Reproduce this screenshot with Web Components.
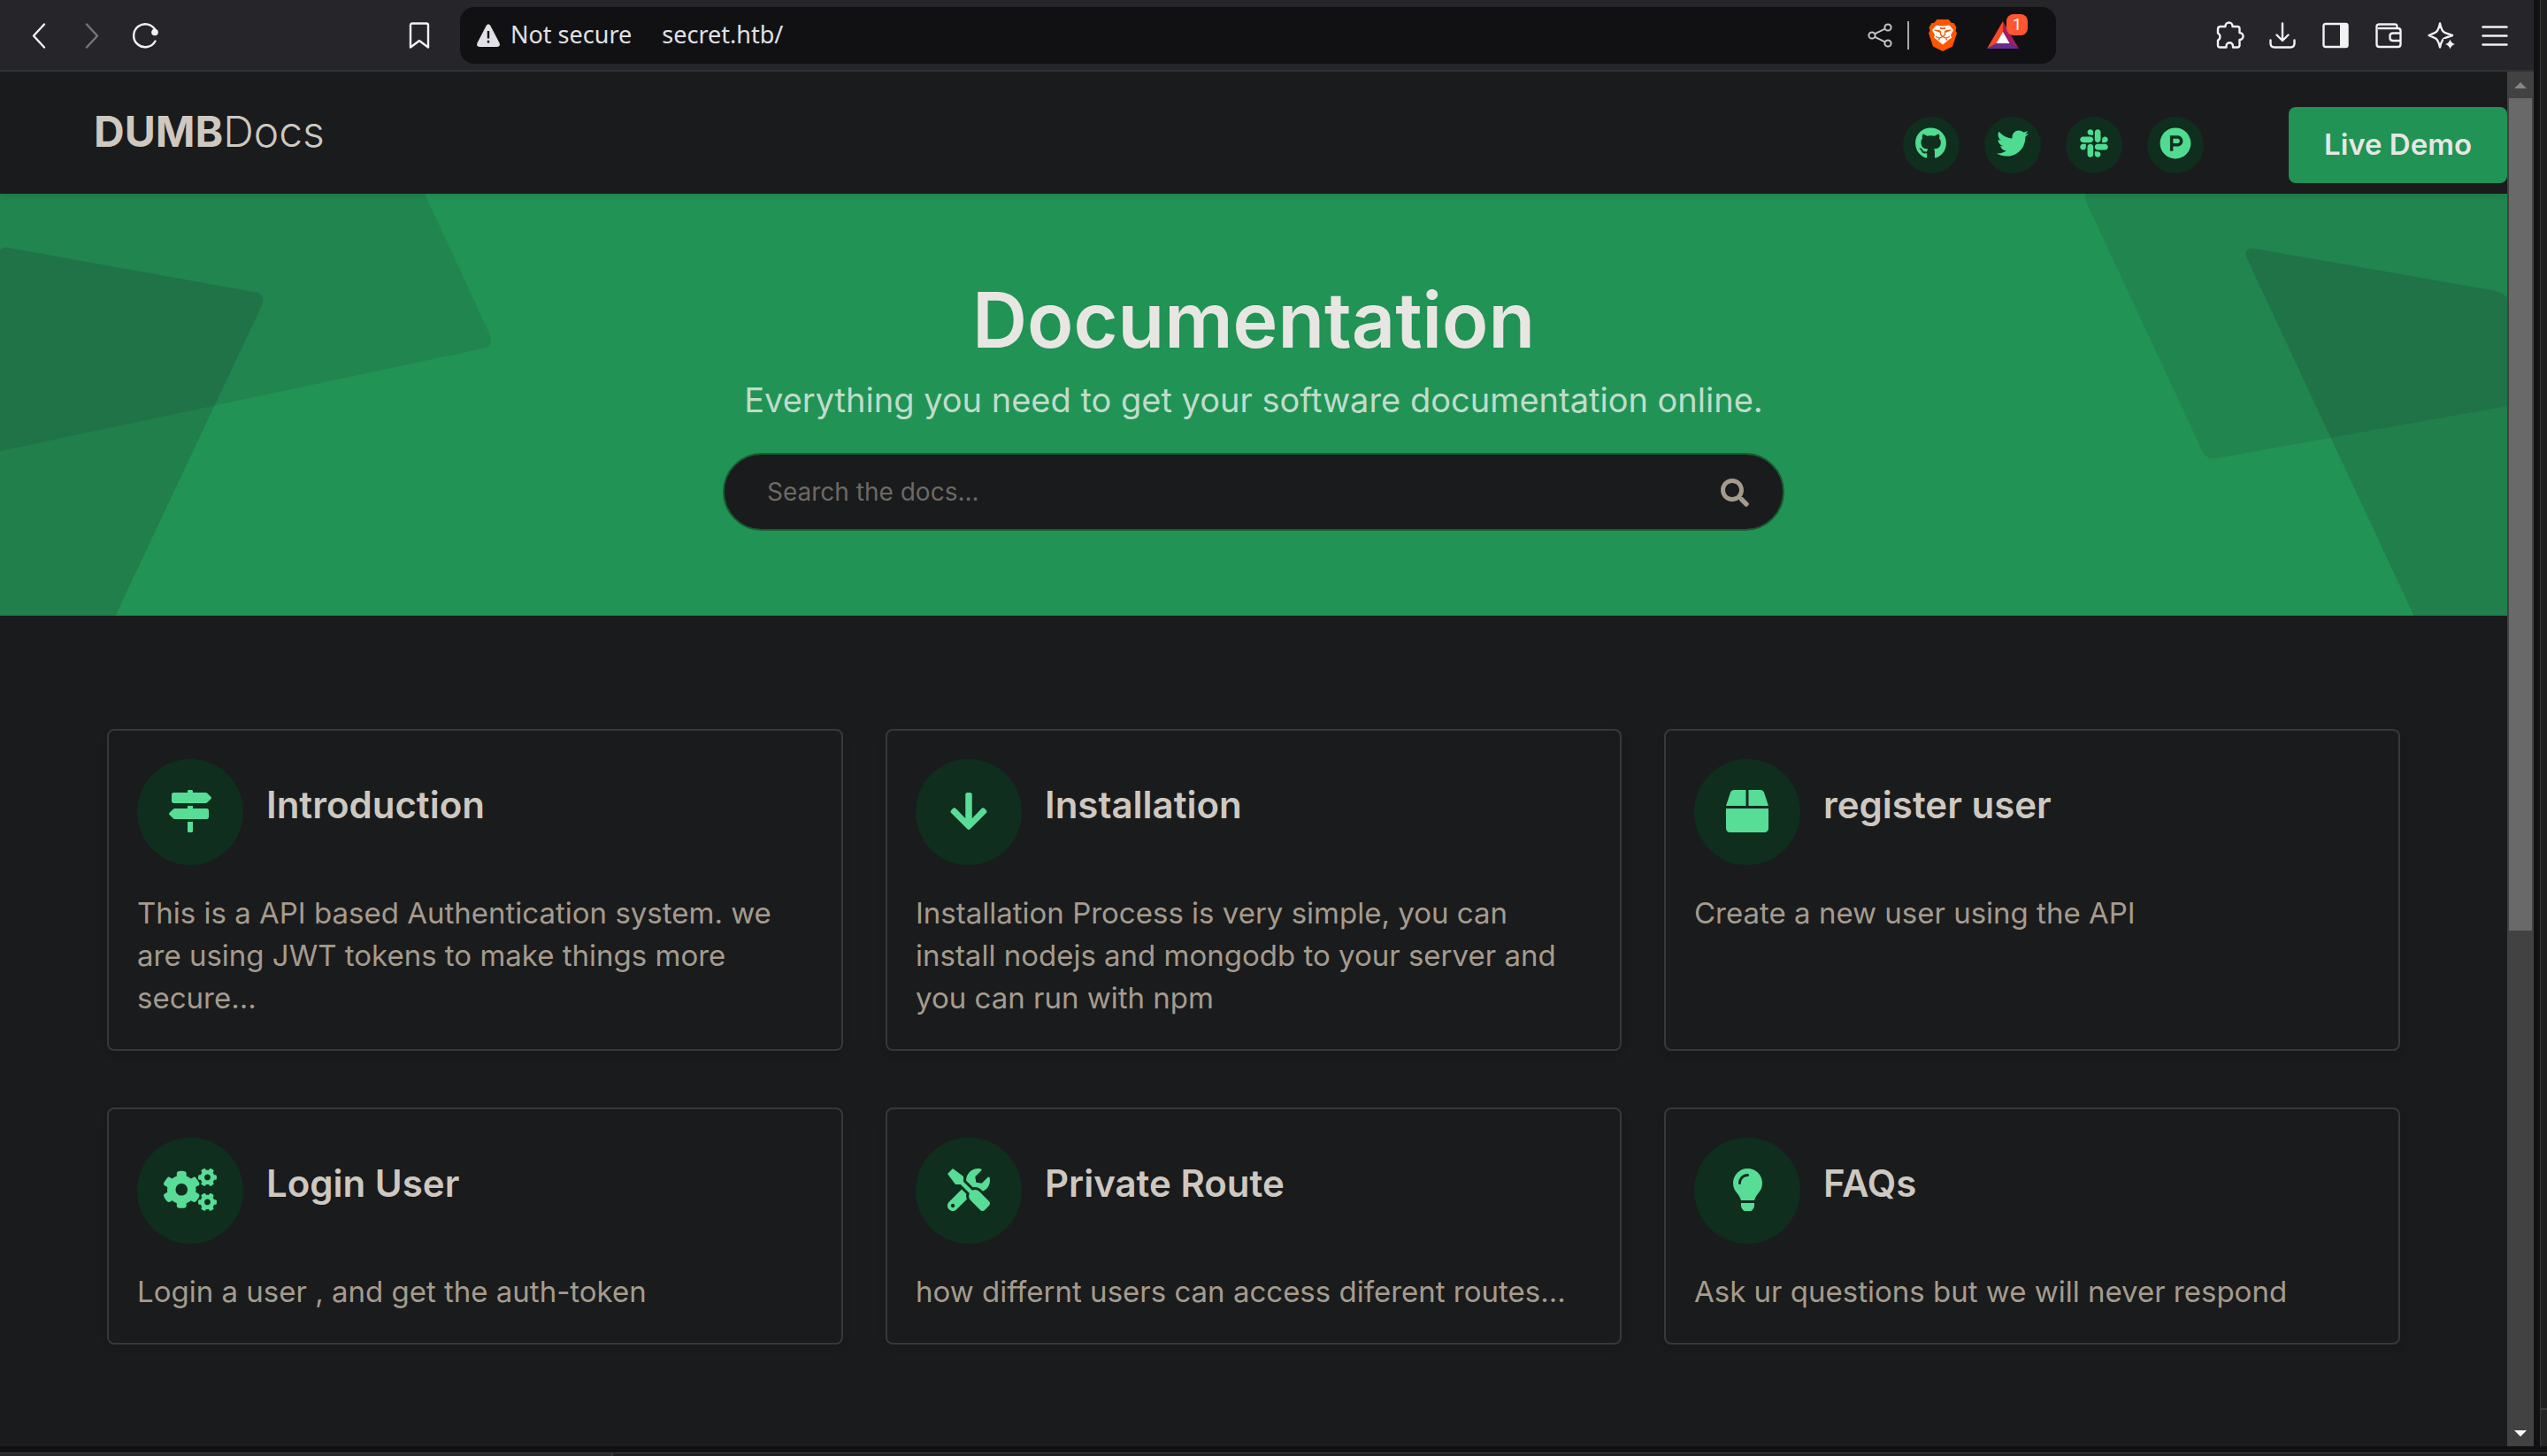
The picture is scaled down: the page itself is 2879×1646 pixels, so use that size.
<!DOCTYPE html>
<html lang="en">
<head>
<meta charset="utf-8">
<title>DUMBDocs</title>
<style>
html, body { margin: 0; height: 100%; }
body {
  background: #111113;
  color: #cec8c0;
  font-family: Inter, sans-serif;
  --page: #1a1b1d;
  --green: #219355;
  --disc: #0f2e1d;
  --mint: #57dd96;
  --muted: #a59b8d;
}
</style>
</head>
<body>
<browser-window>
  <browser-toolbar slot="toolbar"></browser-toolbar>
  <site-header></site-header>
  <hero-banner>
    <span slot="title">Documentation</span>
    <span slot="subtitle">Everything you need to get your software documentation online.</span>
  </hero-banner>
  <card-grid>
    <doc-card icon="signs"><span slot="title">Introduction</span>This is a API based Authentication system. we are using JWT tokens to make things more secure...</doc-card>
    <doc-card icon="arrow"><span slot="title">Installation</span>Installation Process is very simple, you can install nodejs and mongodb to your server and you can run with npm</doc-card>
    <doc-card icon="box"><span slot="title">register user</span>Create a new user using the API</doc-card>
    <doc-card icon="cogs"><span slot="title">Login User</span>Login a user , and get the auth-token</doc-card>
    <doc-card icon="tools"><span slot="title">Private Route</span>how differnt users can access diferent routes...</doc-card>
    <doc-card icon="bulb"><span slot="title">FAQs</span>Ask ur questions but we will never respond</doc-card>
  </card-grid>
</browser-window>

<script>
const stroke = 'fill="none" stroke="currentColor" stroke-width="2.4" stroke-linecap="round" stroke-linejoin="round"';
const smallCog = 'M512.1 191l-8.2 14.3c-3 5.3-9.4 7.5-15.1 5.4-11.8-4.4-22.6-10.7-32.1-18.6-4.6-3.8-5.8-10.5-2.8-15.7l8.2-14.3c-6.9-8-12.3-17.3-15.9-27.4h-16.5c-6 0-11.2-4.3-12.2-10.3-2-12-2.1-24.6 0-37.1 1-6 6.2-10.4 12.2-10.4h16.5c3.6-10.1 9-19.4 15.9-27.4l-8.2-14.3c-3-5.2-1.9-11.9 2.8-15.7 9.5-7.9 20.4-14.2 32.1-18.6 5.7-2.1 12.1.1 15.1 5.4l8.2 14.3c10.5-1.9 21.2-1.9 31.7 0L552 6.3c3-5.3 9.4-7.5 15.1-5.4 11.8 4.4 22.6 10.7 32.1 18.6 4.6 3.8 5.8 10.5 2.8 15.7l-8.2 14.3c6.9 8 12.3 17.3 15.9 27.4h16.5c6 0 11.2 4.3 12.2 10.3 2 12 2.1 24.6 0 37.1-1 6-6.2 10.4-12.2 10.4h-16.5c-3.6 10.1-9 19.4-15.9 27.4l8.2 14.3c3 5.2 1.9 11.9-2.8 15.7-9.5 7.9-20.4 14.2-32.1 18.6-5.7 2.1-12.1-.1-15.1-5.4l-8.2-14.3c-10.4 1.9-21.2 1.9-31.7 0zm-10.5-58.8c38.5 29.6 82.4-14.3 52.8-52.8-38.5-29.7-82.4 14.3-52.8 52.8z';
const fill = (w, d) => [w, 512, `<path fill="currentColor" d="${d}"/>`];

/* name: [viewBox width, viewBox height, markup] */
const ICONS = {
  github: fill(496, 'M165.9 397.4c0 2-2.3 3.6-5.2 3.6-3.3.3-5.6-1.3-5.6-3.6 0-2 2.3-3.6 5.2-3.6 3-.3 5.6 1.3 5.6 3.6zm-31.1-4.5c-.7 2 1.3 4.3 4.3 4.9 2.6 1 5.6 0 6.2-2s-1.3-4.3-4.3-5.2c-2.6-.7-5.5.3-6.2 2.3zm44.2-1.7c-2.9.7-4.9 2.6-4.6 4.9.3 2 2.9 3.3 5.9 2.6 2.9-.7 4.9-2.6 4.6-4.6-.3-1.9-3-3.2-5.9-2.9zM244.8 8C106.1 8 0 113.3 0 252c0 110.9 69.8 205.8 169.5 239.2 12.8 2.3 17.3-5.6 17.3-12.1 0-6.2-.3-40.4-.3-61.4 0 0-70 15-84.7-29.8 0 0-11.4-29.1-27.8-36.6 0 0-22.9-15.7 1.6-15.4 0 0 24.9 2 38.6 25.8 21.9 38.6 58.6 27.5 72.9 20.9 2.3-16 8.8-27.1 16-33.7-55.9-6.2-112.3-14.3-112.3-110.5 0-27.5 7.6-41.3 23.6-58.9-2.6-6.5-11.1-33.3 2.6-67.9 20.9-6.5 69 27 69 27 20-5.6 41.5-8.5 62.8-8.5s42.8 2.9 62.8 8.5c0 0 48.1-33.6 69-27 13.7 34.7 5.2 61.4 2.6 67.9 16 17.7 25.8 31.5 25.8 58.9 0 96.5-58.9 104.2-114.8 110.5 9.2 7.9 17 22.9 17 46.4 0 33.7-.3 75.4-.3 83.6 0 6.5 4.6 14.4 17.3 12.1C428.2 457.8 496 362.9 496 252 496 113.3 383.5 8 244.8 8z'),
  twitter: fill(512, 'M459.37 151.716c.325 4.548.325 9.097.325 13.645 0 138.72-105.583 298.558-298.558 298.558-59.452 0-114.68-17.219-161.137-47.106 8.447.974 16.568 1.299 25.34 1.299 49.055 0 94.213-16.568 130.274-44.832-46.132-.975-84.792-31.188-98.112-72.772 6.498.974 12.995 1.624 19.818 1.624 9.421 0 18.843-1.3 27.614-3.573-48.081-9.747-84.143-51.98-84.143-102.985v-1.299c13.969 7.797 30.214 12.67 47.431 13.319-28.264-18.843-46.781-51.005-46.781-87.391 0-19.492 5.197-37.36 14.294-52.954 51.655 63.675 129.3 105.258 216.365 109.807-1.624-7.797-2.599-15.918-2.599-24.04 0-57.828 46.782-104.934 104.934-104.934 30.213 0 57.502 12.67 76.67 33.137 23.715-4.548 46.456-13.32 66.599-25.34-7.798 24.366-24.366 44.833-46.132 57.827 21.117-2.273 41.584-8.122 60.426-16.243-14.292 20.791-32.161 39.308-52.628 54.253z'),
  slack: fill(448, 'M94.12 315.1c0 25.9-21.16 47.06-47.06 47.06S0 341 0 315.1c0-25.9 21.16-47.06 47.06-47.06h47.06v47.06zm23.72 0c0-25.9 21.16-47.06 47.06-47.06s47.06 21.16 47.06 47.06v117.84c0 25.9-21.16 47.06-47.06 47.06s-47.06-21.16-47.06-47.06V315.1zm47.06-188.98c-25.9 0-47.06-21.16-47.06-47.06S139 32 164.9 32s47.06 21.16 47.06 47.06v47.06H164.9zm0 23.72c25.9 0 47.06 21.16 47.06 47.06s-21.16 47.06-47.06 47.06H47.06C21.16 243.96 0 222.8 0 196.9s21.16-47.06 47.06-47.06H164.9zm188.98 47.06c0-25.9 21.16-47.06 47.06-47.06 25.9 0 47.06 21.16 47.06 47.06s-21.16 47.06-47.06 47.06h-47.06V196.9zm-23.72 0c0 25.9-21.16 47.06-47.06 47.06-25.9 0-47.06-21.16-47.06-47.06V79.06c0-25.9 21.16-47.06 47.06-47.06 25.9 0 47.06 21.16 47.06 47.06V196.9zM283.1 385.88c25.9 0 47.06 21.16 47.06 47.06 0 25.9-21.16 47.06-47.06 47.06-25.9 0-47.06-21.16-47.06-47.06v-47.06h47.06zm0-23.72c-25.9 0-47.06-21.16-47.06-47.06 0-25.9 21.16-47.06 47.06-47.06h117.84c25.9 0 47.06 21.16 47.06 47.06 0 25.9-21.16 47.06-47.06 47.06H283.1z'),
  hunt: fill(512, 'M326.3 218.8c0 20.5-16.7 37.2-37.2 37.2h-70.3v-74.4h70.3c20.5 0 37.2 16.7 37.2 37.2zM504 256c0 137-111 248-248 248S8 393 8 256 119 8 256 8s248 111 248 248zm-128.1-37.2c0-47.9-38.9-86.8-86.8-86.8H169.2v248h49.6v-74.4h70.3c47.9 0 86.8-38.9 86.8-86.8z'),
  search: fill(512, 'M505 442.7L405.3 343c-4.5-4.5-10.6-7-17-7H372c27.6-35.3 44-79.7 44-128C416 93.1 322.9 0 208 0S0 93.1 0 208s93.1 208 208 208c48.3 0 92.7-16.4 128-44v16.3c0 6.4 2.5 12.5 7 17l99.7 99.7c9.4 9.4 24.6 9.4 33.9 0l28.3-28.3c9.4-9.4 9.4-24.6.1-34zM208 336c-70.7 0-128-57.2-128-128 0-70.7 57.2-128 128-128 70.7 0 128 57.2 128 128 0 70.7-57.2 128-128 128z'),
  signs: fill(512, 'M507.31 84.69L464 41.37c-6-6-14.14-9.37-22.63-9.37H288V16c0-8.84-7.16-16-16-16h-32c-8.84 0-16 7.16-16 16v16H56c-13.25 0-24 10.75-24 24v80c0 13.25 10.75 24 24 24h385.37c8.49 0 16.62-3.37 22.63-9.37l43.31-43.31c6.25-6.26 6.25-16.38 0-22.63zM224 496c0 8.84 7.16 16 16 16h32c8.84 0 16-7.16 16-16V384h-64v112zm232-272H288v-32h-64v32H70.63c-8.49 0-16.62 3.37-22.63 9.37L4.69 276.69c-6.25 6.25-6.25 16.38 0 22.63L48 342.63c6 6 14.14 9.37 22.63 9.37H456c13.25 0 24-10.75 24-24v-80c0-13.25-10.75-24-24-24z'),
  arrow: fill(448, 'M413.1 222.5l22.2 22.2c9.4 9.4 9.4 24.6 0 33.9L241 473c-9.4 9.4-24.6 9.4-33.9 0L12.7 278.6c-9.4-9.4-9.4-24.6 0-33.9l22.2-22.2c9.5-9.5 25-9.3 34.3.4L184 343.4V56c0-13.3 10.7-24 24-24h32c13.3 0 24 10.7 24 24v287.4l114.8-120.5c9.3-9.8 24.8-10 34.3-.4z'),
  box: fill(512, 'M509.5 184.6L458.9 32.8C452.4 13.2 434.1 0 413.4 0H272v192h238.7c-.4-2.5-.4-5-1.2-7.4zM240 0H98.6c-20.7 0-39 13.2-45.5 32.8L2.5 184.6c-.8 2.4-.8 4.9-1.2 7.4H240V0zM0 224v240c0 26.5 21.5 48 48 48h416c26.5 0 48-21.5 48-48V224H0z'),
  bulb: fill(352, 'M96.06 454.35c.01 6.29 1.87 12.45 5.36 17.69l17.09 25.69a31.99 31.99 0 0 0 26.64 14.28h61.71a31.99 31.99 0 0 0 26.64-14.28l17.09-25.69a31.989 31.989 0 0 0 5.36-17.69l.04-38.35H96.01l.05 38.35zM0 176c0 44.37 16.45 84.85 43.56 115.78 16.52 18.85 42.36 58.23 52.21 91.45.04.26.07.52.11.78h160.24c.04-.26.07-.51.11-.78 9.85-33.22 35.69-72.6 52.21-91.45C335.55 260.85 352 220.37 352 176 352 78.61 272.91-.3 175.45 0 73.44.31 0 82.97 0 176zm176-80c-44.11 0-80 35.89-80 80 0 8.84-7.16 16-16 16s-16-7.16-16-16c0-61.76 50.24-112 112-112 8.84 0 16 7.16 16 16s-7.16 16-16 16z'),
  tools: fill(512, 'M501.1 395.7L384 278.6c-23.1-23.1-57.6-27.6-85.4-13.9L192 158.1V96L64 0 0 64l96 128h62.1l106.6 106.6c-13.6 27.8-9.2 62.3 13.9 85.4l117.1 117.1c14.6 14.6 38.2 14.6 52.7 0l52.7-52.7c14.5-14.6 14.5-38.2 0-52.7zM331.7 225c28.3 0 54.9 11 74.9 31l19.4 19.4c15.8-6.9 30.8-16.5 43.8-29.5 37.1-37.1 49.7-89.3 37.9-136.7-2.2-9-13.5-12.1-20.1-5.5l-74.4 74.4-67.9-11.3L334 98.9l74.4-74.4c6.6-6.6 3.4-17.9-5.7-20.2-47.4-11.7-99.6.9-136.6 37.9-28.5 28.5-41.9 66.1-41.2 103.6l82.1 82.1c8.1-1.9 16.5-2.9 24.7-2.9zm-103.9 82l-56.7-56.7L18.7 402.8c-25 25-25 65.5 0 90.5s65.5 25 90.5 0l123.6-123.6c-7.6-19.9-9.9-41.6-5-62.7zM64 472c-13.2 0-24-10.8-24-24 0-13.3 10.7-24 24-24s24 10.7 24 24c0 13.2-10.7 24-24 24z'),
  cogs: [640, 512, `<g fill="currentColor"><path d="${smallCog}"/><path transform="translate(0 299)" d="${smallCog}"/><path d="M386.3 286.1l33.7 16.8c10.1 5.8 14.5 18.1 10.5 29.1-8.9 24.2-26.4 46.4-42.6 65.8-7.4 8.9-20.2 11.1-30.3 5.3l-29.1-16.8c-16 13.7-34.6 24.6-54.9 31.7v33.6c0 11.6-8.3 21.6-19.7 23.6-24.6 4.2-50.4 4.4-75.9 0-11.5-2-20-11.9-20-23.6V418c-20.3-7.2-38.9-18-54.9-31.7L74 403c-10 5.8-22.9 3.6-30.3-5.3-16.2-19.4-33.3-41.6-42.2-65.7-4-10.9.4-23.2 10.5-29.1l33.3-16.8c-3.9-20.9-3.9-42.4 0-63.4L12 205.8c-10.1-5.8-14.6-18.1-10.5-29 8.9-24.2 26-46.4 42.2-65.8 7.4-8.9 20.2-11.1 30.3-5.3l29.1 16.8c16-13.7 34.6-24.6 54.9-31.7V57.1c0-11.5 8.2-21.5 19.6-23.5 24.6-4.2 50.5-4.4 76-.1 11.5 2 20 11.9 20 23.6v33.6c20.3 7.2 38.9 18 54.9 31.7l29.1-16.8c10-5.8 22.9-3.6 30.3 5.3 16.2 19.4 33.2 41.6 42.1 65.8 4 10.9.1 23.2-10 29.1l-33.7 16.8c3.9 21 3.9 42.5 0 63.5zm-117.6 21.1c59.2-77-28.7-164.9-105.7-105.7-59.2 77 28.7 164.9 105.7 105.7z"/></g>`],
  back: [30, 30, `<path ${stroke} d="M21 2.500 9 15.500 21 28.500"/>`],
  forward: [30, 30, `<path ${stroke} d="M9 2.500 21 15.500 9 28.500"/>`],
  reload: [30, 30, `<path ${stroke} d="M27 10A13 13 0 1 0 26.500 21.500"/><circle cx="26" cy="11.500" r="3.800" fill="currentColor"/>`],
  bookmark: [30, 30, `<path ${stroke} d="M5 3.500q0-2 2-2h16q2 0 2 2v25l-10-7.500-10 7.500z"/>`],
  warn: [26, 26, `<path fill="currentColor" d="M10.800 1.800q2.200-3 4.400 0L25.500 21.500q1.500 4-2.500 4.500H3q-4-.5-2.500-4.500z"/><path stroke="#111113" stroke-width="2.400" d="M13 8v8.500M13 18.800v2.800"/>`],
  share: [28, 28, `<g fill="none" stroke="currentColor" stroke-width="2"><circle cx="23" cy="5" r="3.600"/><circle cx="23" cy="23" r="3.600"/><circle cx="5" cy="14" r="3.600"/><path d="M8.300 12.200 19.700 6.700M8.300 15.800 19.700 21.300"/></g>`],
  brave: [32, 36, `<path fill="#ff5500" d="M9.500 0h13l3.500 4h2.500l3 5-1 3.500 1.500 3-5 15L16 36 5 30.500 0 15.500l1.500-3L.5 9l3-5H6z"/><path fill="#fff" d="M8.500 6.500L16 7.500l7.500-1L28 12l-3 5.500 1 3-4.500 3.500L16 28.500 10.500 24 6 20.500l1-3L4 12z"/><path fill="#ff5500" d="M6.500 11.500l6 .5 1 3-1.500-.5-5.500-2zM25.500 11.500l-6 .5-1 3 1.500-.5 5.500-2zM12.500 8.500l3.500 1 3.500-1-1 2.500H13.500z"/><path fill="none" stroke="#ff5500" stroke-width="1.300" d="M13.500 13v4l2.500 2.500 2.500-2.500v-4M8 19.500l4.500 1.500 3.500-1.500 3.500 1.500 4.500-1.500M12.500 21l-1 2.500M19.500 21l1 2.500"/>`],
  bat: [36, 31, `<path fill="#ff4724" d="M18 0v12.500L11 25 0 31z"/><path fill="#9e1f63" d="M18 0l18 31-11-6-7-12.500z"/><path fill="#662d91" d="M0 31l11-6.500h14L36 31z"/><path fill="#fff" d="M18 12l7.500 13h-15z"/>`],
  puzzle: [30, 30, `<path ${stroke} d="M2 8q0-3 3-3h5.500V4.500a3.500 3.500 0 0 1 8 0V5H24q2.500 0 2.500 2.500V12a3.800 3.800 0 0 1 0 8v6q0 2.500-2.500 2.500h-5V27a3.500 3.500 0 0 0-7.500 0v1.500H4.500Q2 28.500 2 26v-5.500a4.500 4.500 0 0 0 0-8z"/>`],
  download: [30, 30, `<path ${stroke} d="M15 1.500v19M8.500 14.500l6.500 6.500 6.500-6.500M1.500 20.500V24q0 4.500 4.500 4.500h18q4.500 0 4.500-4.500v-3.500"/>`],
  sidebar: [30, 30, `<rect ${stroke} x="1.500" y="2" width="27" height="26" rx="2"/><path fill="currentColor" d="M20 2h8v26h-8z"/>`],
  wallet: [30, 30, `<path ${stroke} d="M24.500 7V5q0-2.500-2.500-2.500H4.500Q1.500 2.500 1.500 5v20q0 3 3 3h21q3 0 3-3V10q0-3-3-3H4M28.500 12.500H20q-3.500 0-3.500 3v2.500q0 3 3.500 3h8.500"/>`],
  sparkle: [32, 30, `<path ${stroke} d="M14 1.500Q16 11 20 12.200L28 15 20 17.800Q16 19 14 28.500 12 19 8 17.800L1.500 15 8 12.200Q12 11 14 1.500z"/><path fill="#26252a" d="M18 19h14v11H18z"/><path fill="currentColor" d="M25.500 19.500q1.200 4.300 5.500 5.500-4.300 1.200-5.500 5.500-1.200-4.300-5.500-5.500 4.300-1.200 5.500-5.500z"/>`],
  menu: [30, 30, `<path ${stroke} d="M1.500 5.500h27M1.500 15.500h27M1.500 25.500h27"/>`],
};

function define(name, html, setup) {
  const template = document.createElement('template');
  template.innerHTML = html;
  customElements.define(name, class extends HTMLElement {
    constructor() {
      super();
      this.attachShadow({ mode: 'open' }).append(template.content.cloneNode(true));
    }
    connectedCallback() { if (setup) setup(this); }
  });
}

/* <ui-icon name height>: the width follows from the drawing's proportions */
define('ui-icon', `
<style>:host { display: inline-flex; flex: none; } svg { display: block; overflow: visible; }</style>
<span></span>`, host => {
  const [w, h, body] = ICONS[host.getAttribute('name')];
  const height = Number(host.getAttribute('height') || h);
  host.shadowRoot.querySelector('span').innerHTML =
    `<svg aria-hidden="true" viewBox="0 0 ${w} ${h}" width="${Math.round(height * w / h)}" height="${height}">${body}</svg>`;
});

define('browser-window', `
<style>
:host { display: grid; grid-template: 1fr 11px / 1fr 15px; height: 100vh; }
.window { display: grid; grid-template: auto 1fr / 1fr 30px; min-height: 0; }
slot[name=toolbar] { display: block; grid-column: 1 / -1; }
main { background: var(--page); overflow: hidden; }
.bar { display: flex; flex-direction: column; align-items: center; background: #424242; }
.cap { display: flex; align-items: center; justify-content: center; height: 30px; flex: none; }
.cap::before { content: ""; border: 7px solid transparent; border-top-width: 0; border-bottom: 7px solid #868686; }
.cap.down::before { border-bottom-width: 0; border-top: 7px solid #fff; }
.track { flex: 1; align-self: stretch; padding: 0 2px; }
.thumb { height: 63%; background: #696969; }
.side { display: flex; flex-direction: column; margin-left: 7px; border-left: 1px solid #3a3a3b; background: #1e1e1e; }
.side::after { content: ""; height: 41px; margin-top: auto; border-top: 2px solid #3a3a3b; background: #262626; }
.foot { grid-column: 1 / -1; margin-top: 7px; border-top: 1px solid #3a3a3b; background: #1e1e1e; display: flex; }
.foot::before { content: ""; width: 24%; background: #262626; border-right: 2px solid #3a3a3b; }
</style>
<div class="window">
  <slot name="toolbar"></slot>
  <main><slot></slot></main>
  <div class="bar"><div class="cap"></div><div class="track"><div class="thumb"></div></div><div class="cap down"></div></div>
</div>
<div class="side"></div>
<div class="foot"></div>`);

define('browser-toolbar', `
<style>
:host { display: flex; align-items: center; box-sizing: border-box; height: 81px; padding: 0 29px; border-bottom: 2px solid #313136; background: #26252a; color: #f2f2f5; font: 27px/36px "Noto Sans", sans-serif; }
nav { display: flex; gap: 30px; }
button { display: flex; justify-content: center; width: 30px; padding: 0; border: 0; background: none; color: inherit; }
button[disabled] { color: #77767c; }
.mark { margin: 0 31px 0 280px; }
.address { flex: 1; display: flex; align-items: center; box-sizing: border-box; height: 64px; padding: 0 42px 0 19px; border-radius: 16px; background: #111113; color: #e0e0e6; }
.address span { margin-left: 12px; padding-bottom: 2px; }
input { flex: 1; min-width: 0; margin-left: 34px; padding: 0 0 2px; border: 0; background: none; color: inherit; font: inherit; outline: 0; }
.extras { display: flex; align-items: center; color: #c3c3c8; }
.extras i { width: 2px; height: 32px; margin: 0 23px 0 16px; background: #a9a9ae; }
.extras .reward { position: relative; width: 36px; margin-left: 35px; }
.extras b { position: absolute; right: -10px; top: -8px; min-width: 24px; border-radius: 8px; background: #ff5530; color: #fff; font: 18px/24px Roboto, sans-serif; text-align: center; }
.tools { margin-left: 181px; }
</style>
<nav>
  <button aria-label="Back"><ui-icon name="back"></ui-icon></button>
  <button aria-label="Forward" disabled><ui-icon name="forward"></ui-icon></button>
  <button aria-label="Reload"><ui-icon name="reload"></ui-icon></button>
</nav>
<button class="mark" aria-label="Bookmark"><ui-icon name="bookmark"></ui-icon></button>
<div class="address">
  <ui-icon name="warn"></ui-icon><span>Not secure</span>
  <input type="text" aria-label="Address" value="secret.htb/">
  <div class="extras">
    <button aria-label="Share"><ui-icon name="share"></ui-icon></button><i></i>
    <button aria-label="Shields"><ui-icon name="brave"></ui-icon></button>
    <button class="reward" aria-label="Rewards"><ui-icon name="bat"></ui-icon><b>1</b></button>
  </div>
</div>
<nav class="tools">
  <button aria-label="Extensions"><ui-icon name="puzzle"></ui-icon></button>
  <button aria-label="Downloads"><ui-icon name="download"></ui-icon></button>
  <button aria-label="Sidebar"><ui-icon name="sidebar"></ui-icon></button>
  <button aria-label="Wallet"><ui-icon name="wallet"></ui-icon></button>
  <button aria-label="Assistant"><ui-icon name="sparkle"></ui-icon></button>
  <button aria-label="Menu"><ui-icon name="menu"></ui-icon></button>
</nav>`);

define('site-header', `
<style>
:host { display: flex; align-items: center; justify-content: space-between; box-sizing: border-box; height: 138px; padding-left: 106px; position: relative; z-index: 1; background: var(--page); box-shadow: 0 0 8px rgba(0, 0, 0, .2); }
a { color: inherit; text-decoration: none; }
.logo { padding-bottom: 2px; font-size: 48px; line-height: 56px; font-weight: 300; }
.logo b { font-weight: 700; }
.actions { display: flex; align-items: center; margin-top: 28px; }
.social { display: flex; gap: 28px; margin-right: 96px; }
.social a { display: flex; align-items: center; justify-content: center; box-sizing: border-box; width: 64px; height: 64px; padding-bottom: 4px; border-radius: 50%; background: var(--disc); color: #4fdc91; }
.demo { padding: 22px 40px 24px; border-radius: 8px; background: var(--green); color: #e8e6e3; font-size: 33px; line-height: 40px; font-weight: 600; }
</style>
<a class="logo" href="#"><b>DUMB</b>Docs</a>
<div class="actions">
  <div class="social">
    <a href="#" aria-label="GitHub"><ui-icon name="github" height="36"></ui-icon></a>
    <a href="#" aria-label="Twitter"><ui-icon name="twitter" height="36"></ui-icon></a>
    <a href="#" aria-label="Slack"><ui-icon name="slack" height="36"></ui-icon></a>
    <a href="#" aria-label="Product Hunt"><ui-icon name="hunt" height="36"></ui-icon></a>
  </div>
  <a class="demo" href="#">Live Demo</a>
</div>`);

define('hero-banner', `
<style>
:host { display: flex; flex-direction: column; align-items: center; position: relative; overflow: hidden; padding: 95px 0 96px; background: var(--green); }
.shape { position: absolute; top: 0; }
.left { left: 0; }
.right { right: 0; }
h1, p, form { position: relative; margin: 0; }
h1 { color: #e8e6e3; font-size: 86px; line-height: 96px; font-weight: 600; }
p { margin: 14px 0 32px; color: #bfdccb; font-size: 38px; line-height: 56px; }
form { display: flex; align-items: center; box-sizing: border-box; width: 1200px; max-width: 90%; height: 88px; padding: 0 38px 0 48px; border: 2px solid #185c33; border-radius: 44px; background: var(--page); }
input { flex: 1; min-width: 0; padding: 0; border: 0; outline: 0; background: none; color: var(--muted); font: 28px/40px Inter, sans-serif; }
input::placeholder { color: #6e6963; opacity: 1; }
button { display: flex; padding: 2px 0 0; border: 0; background: none; color: var(--muted); }
</style>
<svg class="shape left" width="570" height="478" aria-hidden="true">
  <path fill="#1d1f20" fill-opacity=".11" d="M0 0H480L553 158Q558 170 550 174L0 291z"/>
  <path fill="#1d1f20" fill-opacity=".17" d="M0 64Q3 60 9 61L292 112Q299 116 297 124L130 478H0z"/>
</svg>
<svg class="shape right" width="480" height="478" aria-hidden="true">
  <path fill="#1d1f20" fill-opacity=".11" d="M4 0Q1 3 4 9L136 292Q141 301 152 299L480 240V0z"/>
  <path fill="#1d1f20" fill-opacity=".17" d="M185 71Q183 60 194 62L467 110Q476 112 480 118V478H375z"/>
</svg>
<h1><slot name="title"></slot></h1>
<p><slot name="subtitle"></slot></p>
<form>
  <input type="search" aria-label="Search the docs" placeholder="Search the docs...">
  <button type="button" aria-label="Search"><ui-icon name="search" height="32"></ui-icon></button>
</form>`);

define('card-grid', `
<style>
:host { display: grid; grid-template-columns: repeat(3, 1fr); gap: 64px 48px; width: 2592px; max-width: 92%; margin: 128px auto 0; }
</style>
<slot></slot>`);

define('doc-card', `
<style>
:host { display: block; border: 2px solid #36393b; border-radius: 8px; box-shadow: 0 4px 8px rgba(0, 0, 0, .1); }
a { display: block; padding: 32px 32px 34px; color: inherit; text-decoration: none; }
header { display: flex; align-items: center; gap: 26px; margin-bottom: 30px; }
.disc { display: flex; align-items: center; justify-content: center; box-sizing: border-box; width: 120px; height: 120px; padding-bottom: 2px; border-radius: 50%; background: var(--disc); color: var(--mint); }
h2 { margin: 0; padding-bottom: 16px; font-size: 42px; line-height: 48px; font-weight: 600; }
p { margin: 0; color: var(--muted); font-size: 33px; line-height: 48px; }
</style>
<a href="#">
  <header><span class="disc"></span><h2><slot name="title"></slot></h2></header>
  <p><slot></slot></p>
</a>`, host => {
  host.shadowRoot.querySelector('.disc').innerHTML = `<ui-icon name="${host.getAttribute('icon')}" height="48"></ui-icon>`;
});
</script>
</body>
</html>
